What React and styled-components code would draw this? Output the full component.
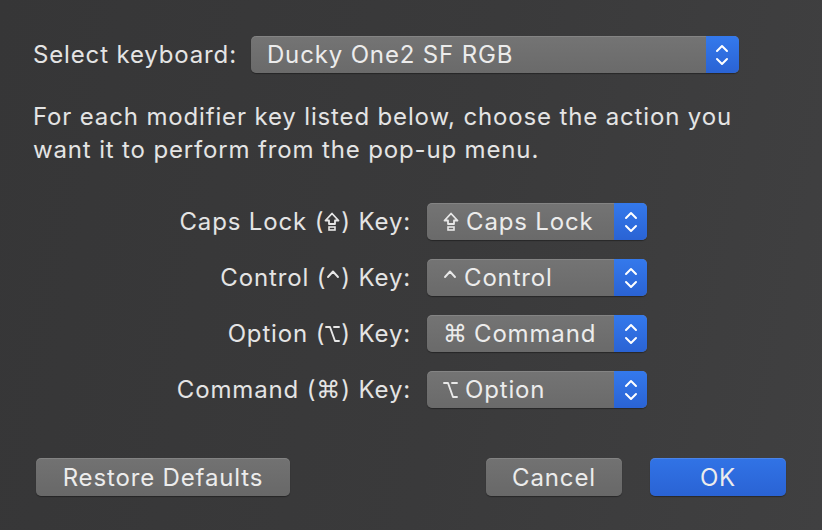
import React from 'react'
import styled, { createGlobalStyle } from 'styled-components';

const Global = createGlobalStyle`
  html, body {
    margin: 0;
    padding: 0;
    background: #3a3a3b;
  }
  body {
    font-family: Inter, "Noto Sans", "DejaVu Sans", sans-serif;
    color: #e4e4e4;
  }
`;

const Dialog = styled.div`
  width: 822px;
  height: 530px;
  box-sizing: border-box;
  padding: 36px 36px 0 33px;
  background: linear-gradient(100deg, #363637 0%, #3a3a3b 55%, #404041 100%);
  display: flex;
  flex-direction: column;
  font-size: 24px;
  letter-spacing: 0.85px;
`;

const TopRow = styled.div`
  display: flex;
  align-items: center;
  gap: 14px;
`;

const Label = styled.span`
  display: flex;
  align-items: center;
  height: 37px;
  white-space: nowrap;
`;

const Popup = styled.div`
  width: ${p => p.$width}px;
  height: 37px;
  box-sizing: border-box;
  display: flex;
  border-radius: 5px;
  overflow: hidden;
  background: linear-gradient(#747474, #6a6a6a);
  box-shadow: 0 1px 1px rgba(0, 0, 0, 0.35), inset 0 1px 0 rgba(255, 255, 255, 0.12);
`;

const PopupText = styled.span`
  flex: 1;
  display: flex;
  align-items: center;
  padding-left: 16px;
  color: #ececec;
  white-space: nowrap;
`;

const Stepper = styled.span`
  width: 33px;
  display: flex;
  align-items: center;
  justify-content: center;
  background: linear-gradient(#3479ec, #2a63d4);
`;

const Paragraph = styled.p`
  margin: 27px 0 0;
  line-height: 33px;
  width: 720px;
`;

const Modifiers = styled.div`
  margin-top: 37px;
  display: grid;
  grid-template-columns: 378px 220px;
  column-gap: 16px;
  row-gap: 19px;
  align-items: center;
  justify-items: end;
`;

const Sym = styled.span`
  font-family: "DejaVu Sans", sans-serif;
  font-size: 24px;
  line-height: 1;
  letter-spacing: 0;
  margin: 0 ${p => p.$space || 0}px 0 0;
`;

const KeySvg = styled.svg`
  flex: none;
  margin: 0 ${p => p.$right || 0}px 0 ${p => p.$left || 0}px;
`;

const Buttons = styled.div`
  margin-top: 50px;
  padding-left: 3px;
  display: flex;
  align-items: center;
`;

const Button = styled.button`
  width: ${p => p.$width}px;
  height: 38px;
  border: none;
  border-radius: 5px;
  font-family: inherit;
  font-size: 24px;
  letter-spacing: 0.85px;
  color: #ececec;
  background: ${p => p.$primary
    ? 'linear-gradient(#3173e6, #2a63d4)'
    : 'linear-gradient(#727272, #686868)'};
  box-shadow: 0 1px 1px rgba(0, 0, 0, 0.35), inset 0 1px 0 rgba(255, 255, 255, 0.12);
  padding: 0;
  margin-left: ${p => p.$gap || 0}px;
`;

const Spacer = styled.div`
  flex: 1;
`;

const Chevrons = () => (
  <svg width="14" height="24" viewBox="0 0 14 24">
    <path d="M2 8 L7 3 L12 8" fill="none" stroke="#fff" strokeWidth="2" strokeLinecap="round" strokeLinejoin="round" />
    <path d="M2 16 L7 21 L12 16" fill="none" stroke="#fff" strokeWidth="2" strokeLinecap="round" strokeLinejoin="round" />
  </svg>
);

const CapsLock = ({ right }) => (
  <KeySvg $right={right} width="16" height="20" viewBox="0 0 16 20">
    <path d="M8 1.5 L14.5 8.5 L11 8.5 L11 12 L5 12 L5 8.5 L1.5 8.5 Z" fill="none" stroke="#e8e8e8" strokeWidth="1.8" strokeLinejoin="round" />
    <rect x="5" y="15" width="6" height="3" fill="none" stroke="#e8e8e8" strokeWidth="1.6" />
  </KeySvg>
);

const ControlKey = ({ right }) => (
  <KeySvg $right={right} width="14" height="20" viewBox="0 0 14 20">
    <path d="M2 9 L7 3.5 L12 9" fill="none" stroke="#e8e8e8" strokeWidth="1.9" strokeLinecap="round" strokeLinejoin="round" />
  </KeySvg>
);

const OptionKey = ({ right }) => (
  <KeySvg $right={right} width="15" height="20" viewBox="0 0 15 20">
    <path d="M1 3 H5 L10 17 H14 M9 3 H14" fill="none" stroke="#e8e8e8" strokeWidth="1.9" strokeLinecap="round" strokeLinejoin="round" />
  </KeySvg>
);

const Select = ({ width, children }) => (
  <Popup $width={width}>
    <PopupText>{children}</PopupText>
    <Stepper><Chevrons /></Stepper>
  </Popup>
);

const symbol = (s, space) => {
  if (s === 'caps') return <CapsLock right={space} />;
  if (s === 'ctrl') return <ControlKey right={space} />;
  if (s === 'opt') return <OptionKey right={space} />;
  return <Sym $space={space}>{s}</Sym>;
};

const rows = [
  { name: 'Caps Lock', sym: 'caps', value: 'Caps Lock', valueSym: 'caps' },
  { name: 'Control', sym: 'ctrl', value: 'Control', valueSym: 'ctrl' },
  { name: 'Option', sym: 'opt', value: 'Command', valueSym: '⌘' },
  { name: 'Command', sym: '⌘', value: 'Option', valueSym: 'opt' },
];

const App = () => {
  return (
    <>
      <Global />
      <Dialog>
        <TopRow>
          <Label>Select keyboard:</Label>
          <Select width={488}>Ducky One2 SF RGB</Select>
        </TopRow>
        <Paragraph>
          For each modifier key listed below, choose the action you want it to perform from the pop-up menu.
        </Paragraph>
        <Modifiers>
          {rows.map(r => (
            <React.Fragment key={r.name}>
              <Label>{r.name}&nbsp;({symbol(r.sym, 1)})&nbsp;Key:</Label>
              <Select width={220}>{symbol(r.valueSym, 7)}{r.value}</Select>
            </React.Fragment>
          ))}
        </Modifiers>
        <Buttons>
          <Button $width={254}>Restore Defaults</Button>
          <Spacer />
          <Button $width={136}>Cancel</Button>
          <Button $width={136} $gap={28} $primary>OK</Button>
        </Buttons>
      </Dialog>
    </>
  )
}

export default App;
